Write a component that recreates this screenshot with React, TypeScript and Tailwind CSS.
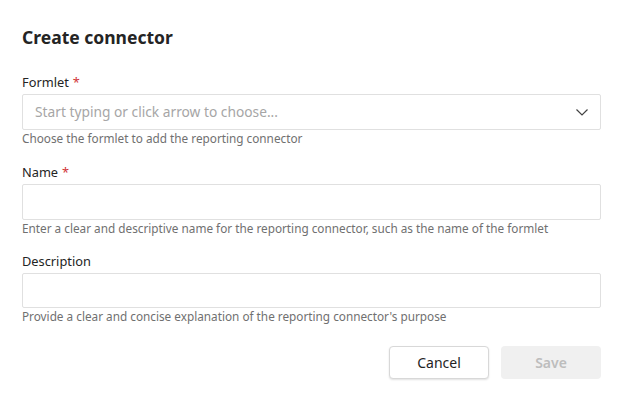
import React from "react";

function Field({
  label,
  required,
  helper,
  children,
  className,
}: {
  label: string;
  required?: boolean;
  helper: string;
  children: React.ReactNode;
  className?: string;
}) {
  return (
    <div className={"flex flex-col " + (className ?? "")}>
      <div className="h-[20px] flex items-center text-[12.8px] text-[#242424] leading-[20px]">
        {label}
        {required && <span className="ml-[4px] text-[#d13438]">*</span>}
      </div>
      <div className="mt-[2px]">{children}</div>
      <div className="h-[16px] text-[11.78px] leading-[16px] text-[#707070]">{helper}</div>
    </div>
  );
}

export default function App() {
  return (
    <div
      className="w-[621px] h-[399px] bg-white pl-[22px] pr-[20px] pt-[25px]"
      style={{ fontFamily: '"Noto Sans", "Open Sans", sans-serif' }}
    >
      <h1 className="text-[17.5px] font-bold leading-[24px] text-[#242424]">Create connector</h1>
      <Field
        className="mt-[23px]"
        label="Formlet"
        required
        helper="Choose the formlet to add the reporting connector"
      >
        <div className="h-[36px] border border-[#e0e0e0] rounded-[2px] flex items-center pl-[12px] pr-[10px]">
          <span className="flex-1 text-[13.75px] text-[#a6a6a6]">Start typing or click arrow to choose...</span>
          <svg width="16" height="16" viewBox="0 0 16 16" fill="none">
            <path d="M2.5 5.5 L8 11 L13.5 5.5" stroke="#424242" strokeWidth="1.2" />
          </svg>
        </div>
      </Field>
      <Field
        className="mt-[16px]"
        label="Name"
        required
        helper="Enter a clear and descriptive name for the reporting connector, such as the name of the formlet"
      >
        <div className="h-[36px] border border-[#e0e0e0] rounded-[2px]" />
      </Field>
      <Field
        className="mt-[15px]"
        label="Description"
        helper="Provide a clear and concise explanation of the reporting connector's purpose"
      >
        <div className="h-[35px] border border-[#e0e0e0] rounded-[2px]" />
      </Field>
      <div className="mt-[22px] flex justify-end gap-[12px]">
        <button className="w-[100px] h-[33px] border border-[#d8d8d8] rounded-[4px] bg-white text-[14px] text-[#242424] shadow-[0_1px_2px_rgba(0,0,0,0.12)]">
          Cancel
        </button>
        <button className="w-[100px] h-[33px] rounded-[4px] bg-[#f0f0f0] text-[14px] font-semibold text-[#bdbdbd]">
          Save
        </button>
      </div>
    </div>
  );
}
